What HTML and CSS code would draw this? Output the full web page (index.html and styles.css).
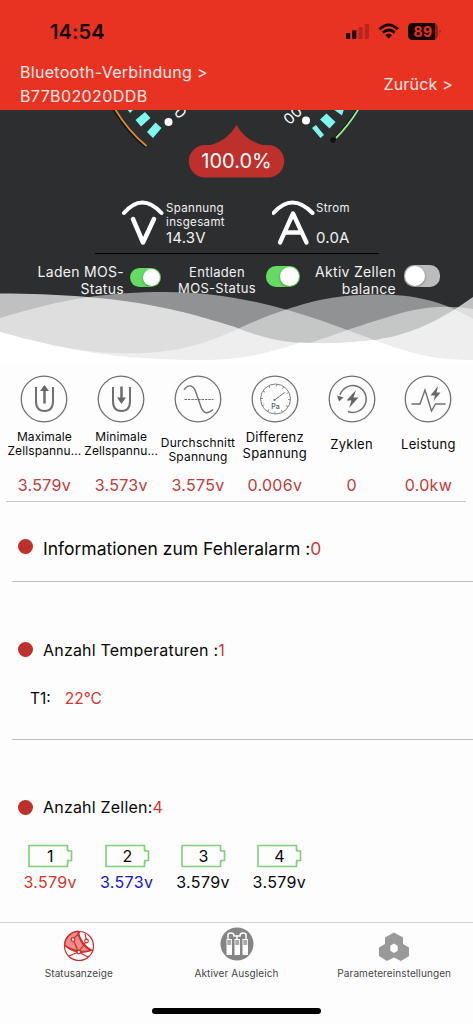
FILE: index.html
```html
<!DOCTYPE html>
<html lang="de">
<head>
<meta charset="utf-8">
<title>Statusanzeige</title>
<link rel="stylesheet" href="styles.css">
</head>
<body>
<div class="app">
  <header class="header">
    <div class="statusbar">
      <span class="clock">14:54</span>
      <svg class="signals" width="100" height="20" viewBox="0 0 100 20">
        <g fill="#140201"><rect x="1" y="12" width="4.200" height="6" rx="1"/><rect x="7.200" y="9.300" width="4.200" height="8.700" rx="1"/></g>
        <g fill="#b9251b"><rect x="13.500" y="6" width="4.200" height="12" rx="1"/><rect x="19.700" y="3" width="4.200" height="15" rx="1"/></g>
        <g fill="none" stroke="#140201" stroke-width="2.700"><path d="M34.500 8.300Q43.700-.5 52.900 8.300"/><path d="M37.700 11.800Q43.700 6.200 49.700 11.800"/></g>
        <path d="M40.300 14.100Q43.700 11.300 47.100 14.100L43.700 17.700Z" fill="#140201"/>
        <rect x="63" y="2" width="30" height="17" rx="5" fill="#962019"/>
        <path d="M68 2H90V19H68Q63 19 63 14V7Q63 2 68 2Z" fill="#140201"/>
        <path d="M94.500 8.500Q97 10.500 94.500 12.500Z" fill="#962019"/>
        <text x="78" y="15.800" class="battery-level">89</text>
      </svg>
    </div>
    <div class="navbar">
      <div class="device"><span class="device-title">Bluetooth-Verbindung &gt;</span><br><span class="device-id">B77B02020DDB</span></div>
      <span class="back">Zurück &gt;</span>
    </div>
  </header>

  <section class="panel">
    <svg class="gauge" width="280" height="75" viewBox="100 110 280 75">
      <path d="M115 109Q128 131 146.500 146" fill="none" stroke="#111" stroke-width="2" transform="translate(-1 1)"/>
      <path d="M115 109Q128 131 146.500 146" fill="none" stroke="#dc8b32" stroke-width="1.800"/>
      <circle cx="333" cy="140" r="2.800" fill="#111"/>
      <path d="M358.500 109Q349 125 336 138" fill="none" stroke="#111" stroke-width="2" transform="translate(-1 0)"/>
      <path d="M358.500 109Q349 125 336 138" fill="none" stroke="#8cf28a" stroke-width="1.800"/>
      <g fill="#7cf8ee">
        <path d="M127 109h7l-4 4Z"/>
        <path d="M135.500 120L145 112L150.500 118L141 126.500Z"/>
        <path d="M147 132L155.500 122.500L161.500 128L153 138Z"/>
        <path d="M312 128L316 125L324 135L320.500 138Z"/>
        <path d="M320 119.500L326.500 113.500L335.500 122L329.500 128.500Z"/>
        <path d="M333 109H344L342 115.500Z"/>
      </g>
      <circle cx="168.500" cy="122" r="4" fill="#fff"/><circle cx="306" cy="120.500" r="4" fill="#fff"/>
      <g class="scale"><text transform="translate(180 113) rotate(50)" x="0" y="5">0</text><text transform="translate(289.500 118.500) rotate(-42)" x="0" y="5">0</text><text transform="translate(296.500 112) rotate(-42)" x="0" y="5">0</text></g>
      <path d="M236.500 125Q245 140 262 145H268A16 16 0 0 1 268 177.500H205A16 16 0 0 1 205 145H211Q228 140 236.500 125Z" fill="#bd302b"/>
      <text x="236.500" y="168" class="percent">100.0%</text>
    </svg>
    <div class="meters">
      <div class="meter meter-voltage">
        <svg width="44" height="48" viewBox="0 0 44 48" fill="none" stroke="#fff" stroke-linecap="round" stroke-linejoin="round"><path d="M2 14Q20-7 39.500 14" stroke-width="4"/><path d="M11 20L21 43.500L32 20" stroke-width="4.500"/></svg>
        <div class="meter-text"><span class="meter-name">Spannung<br>insgesamt</span><span class="meter-value">14.3V</span></div>
      </div>
      <div class="meter meter-current">
        <svg width="44" height="48" viewBox="0 0 44 48" fill="none" stroke="#fff" stroke-linecap="round" stroke-linejoin="round"><path d="M1.500 14Q20-7 40.500 14" stroke-width="4"/><path d="M8 43.500L21 14.500L34.500 43.500M13 33.500H30" stroke-width="4.300"/></svg>
        <div class="meter-text"><span class="meter-name">Strom</span><span class="meter-value">0.0A</span></div>
      </div>
    </div>
    <div class="switches">
      <span class="label label-charge">Laden MOS-<br>Status</span><span class="toggle on toggle-charge"></span>
      <span class="label label-discharge">Entladen<br>MOS-Status</span><span class="toggle on toggle-discharge"></span>
      <span class="label label-balance">Aktiv Zellen<br>balance</span><span class="toggle toggle-balance"></span>
    </div>
    <svg class="waves" width="473" height="80" viewBox="0 285 473 80">
      <g fill="#fff">
        <path opacity=".7" d="M0 293.500C120 294 175 308 235 327C265 339 285 343.500 320 343.500C385 343 420 335 473 297V365H0Z"/>
        <path opacity=".48" d="M0 318C65 298 110 292 165 292C255 292 325 322 374 340C415 355 435 360 473 360V365H0Z"/>
        <path opacity=".48" d="M0 332C55 347 85 353 130 353.500C210 353 235 325 285 310C320 298 345 294.500 378 294.500C415 294.500 442 301 473 319V365H0Z"/>
        <path opacity=".48" d="M0 332C70 351 120 360 200 360C285 360 325 335 385 318C415 308 440 304 473 309V365H0Z"/>
        <path d="M0 332C70 351 120 360 200 360C245 360 272 352 300 342.500C325 344 350 343 374 340C415 355 435 360 473 360V365H0Z"/>
      </g>
    </svg>
  </section>

  <section class="metrics">
    <div class="metric">
      <svg class="metric-icon" viewBox="0 0 48 48"><circle cx="24" cy="24" r="22.800"/><g stroke-width="2"><path d="M16 12V26Q16 36 24.500 36Q33 36 33 26V12"/><path d="M24.500 28.500V15" stroke-width="2.600"/></g><path class="solid" d="M24.500 10L29 16H20Z"/></svg>
      <span class="metric-name up">Maximale<br>Zellspannu...</span><span class="metric-value">3.579v</span>
    </div>
    <div class="metric">
      <svg class="metric-icon" viewBox="0 0 48 48"><circle cx="24" cy="24" r="22.800"/><g stroke-width="2"><path d="M16 12V26Q16 36 24.500 36Q33 36 33 26V12"/><path d="M24.500 11.500V24" stroke-width="2.600"/></g><path class="solid" d="M24.500 29L29 22.500H20Z"/></svg>
      <span class="metric-name up">Minimale<br>Zellspannu...</span><span class="metric-value">3.573v</span>
    </div>
    <div class="metric">
      <svg class="metric-icon" viewBox="0 0 48 48"><circle cx="24" cy="24" r="22.800"/><path d="M10 14.500C15 8.500 20 10 22.500 19L26 29C28.500 38 32.500 40.500 39 34.500" stroke-width="1.400"/><path d="M10.500 24.500H39.500" stroke-dasharray="2.500 .9" stroke-width="1.200"/></svg>
      <span class="metric-name down">Durchschnitt<br>Spannung</span><span class="metric-value">3.575v</span>
    </div>
    <div class="metric">
      <svg class="metric-icon" viewBox="0 0 48 48"><circle cx="24" cy="24" r="22.800"/><circle cx="24.500" cy="24" r="15" stroke-width=".9"/><circle cx="24.500" cy="24" r="13.500" stroke-width="2" stroke-dasharray=".8 6.270"/><path d="M23 25.500L33.500 17.500" stroke-width="1"/><circle class="solid" cx="23.500" cy="25" r="1"/><text class="pa" x="24.500" y="34">Pa</text></svg>
      <span class="metric-name differenz">Differenz<br>Spannung</span><span class="metric-value">0.006v</span>
    </div>
    <div class="metric">
      <svg class="metric-icon" viewBox="0 0 48 48"><circle cx="24" cy="24" r="22.800"/><path d="M12 20A13.400 13.400 0 1 1 20 36.500" stroke-width="1.500"/><path class="solid" d="M9 20.500L15.500 22.500L11 26.500ZM28 15L18.500 25.500H23.500L21 33L30.500 22.500H25.500Z"/></svg>
      <span class="metric-name single">Zyklen</span><span class="metric-value">0</span>
    </div>
    <div class="metric">
      <svg class="metric-icon" viewBox="0 0 48 48"><circle cx="24" cy="24" r="22.800"/><path d="M7.500 29H16L21 15L27.500 36L31.500 29H41.500" stroke-width="1.400"/><path class="solid" d="M34 11L26.500 20.500H31L29.500 26L36.500 17.500H32.500Z"/></svg>
      <span class="metric-name single">Leistung</span><span class="metric-value">0.0kw</span>
    </div>
  </section>

  <section class="info alarm"><h2 class="heading"><i class="dot"></i><span>Informationen zum Fehleralarm :</span><b>0</b></h2></section>
  <section class="info temps">
    <h2 class="heading"><i class="dot"></i><span>Anzahl Temperaturen :</span><b>1</b></h2>
    <p class="temp"><span class="temp-name">T1:</span><span class="temp-value">22°C</span></p>
  </section>
  <section class="info cells">
    <h2 class="heading"><i class="dot"></i><span>Anzahl Zellen:</span><b>4</b></h2>
    <div class="cell-row">
      <div class="cell max"><svg width="46" height="24" viewBox="0 0 46 24"><path d="M2 1.500H40.500V6.500H41.500V7H44.500V16.500H41V18H40.500V22.500H2Z"/><text x="23.500" y="18">1</text></svg><span>3.579v</span></div>
      <div class="cell min"><svg width="46" height="24" viewBox="0 0 46 24"><path d="M2 1.500H40.500V6.500H41.500V7H44.500V16.500H41V18H40.500V22.500H2Z"/><text x="23.500" y="18">2</text></svg><span>3.573v</span></div>
      <div class="cell"><svg width="46" height="24" viewBox="0 0 46 24"><path d="M2 1.500H40.500V6.500H41.500V7H44.500V16.500H41V18H40.500V22.500H2Z"/><text x="23.500" y="18">3</text></svg><span>3.579v</span></div>
      <div class="cell"><svg width="46" height="24" viewBox="0 0 46 24"><path d="M2 1.500H40.500V6.500H41.500V7H44.500V16.500H41V18H40.500V22.500H2Z"/><text x="23.500" y="18">4</text></svg><span>3.579v</span></div>
    </div>
  </section>

  <nav class="tabbar">
    <div class="tabs">
      <div class="tab">
        <svg width="36" height="36" viewBox="0 0 36 36" fill="none" stroke="#c5302b" stroke-width="1.200"><path d="M3.500 18A15 15 0 0 1 17 4C17 11 22 20 30 23.500Q15 29 3.500 18Z" fill="#f28b88"/><circle cx="18" cy="19" r="14.500"/><path d="M8 29L17.500 25L12 12.500L19 5M17.500 25L25.500 14L24 6.500M17.500 25L27 30M17 4.500Q20 18 32 24M3.500 18Q15 27 32.300 23"/><g fill="#fff"><circle cx="12" cy="12.500" r="1.800"/><circle cx="25.500" cy="14" r="1.800"/><circle cx="17.800" cy="25" r="1.800"/></g></svg>
        <span>Statusanzeige</span>
      </div>
      <div class="tab">
        <svg width="36" height="36" viewBox="0 0 36 36"><circle cx="18" cy="17" r="16.500" fill="#858585"/><g fill="#fff"><path d="M7.500 12H13V28H7.500ZM15.500 12H21V28H15.500ZM23.500 12H29V28H23.500Z"/></g><g fill="#aaa"><path d="M8.300 13h3.900v5H8.300ZM16.300 13h3.900v5h-3.900ZM24.300 13h3.900v5h-3.900Z"/></g><path d="M9 12V8Q9 6 12 6Q15 6 15 9H18V12M18 9H21Q21 6 24 6Q27 6 27 8V12" fill="none" stroke="#fff" stroke-width="1.500"/></svg>
        <span>Aktiver Ausgleich</span>
      </div>
      <div class="tab">
        <svg width="36" height="36" viewBox="0 0 36 36"><path fill="#999" fill-rule="evenodd" d="M18 5.500L27 10.500V17L33 20.500V29L25 34L18 30.500L11 34L3 29V20.500L9 17V10.500ZM18 16.500L14.300 18.700V23.800L18 26L21.700 23.800V18.700Z"/></svg>
        <span>Parametereinstellungen</span>
      </div>
    </div>
    <div class="home-indicator"></div>
  </nav>
</div>
</body>
</html>
```

FILE: styles.css
```css
* { box-sizing: border-box; }
body { margin: 0; font-family: Inter, "Liberation Sans", sans-serif; background: #fdfdfd; color: #080808; }
.app { width: 473px; height: 1024px; display: flex; flex-direction: column; overflow: hidden; }
svg { display: block; flex: none; }

.header { height: 110px; background: #e83323; display: flex; flex-direction: column; }
.statusbar { height: 60px; padding: 21px 28px 0 50px; display: flex; justify-content: space-between; color: #140201; }
.clock { font-size: 20px; line-height: 22px; font-weight: 600; letter-spacing: .1px; }
.battery-level { font-size: 14px; font-weight: 700; fill: #e83323; text-anchor: middle; letter-spacing: .5px; }
.navbar { display: flex; justify-content: space-between; padding: 0 20px; color: #fde9e5; font-size: 16px; line-height: 24px; }
.device-title { letter-spacing: .3px; }
.device-id { letter-spacing: .4px; }
.back { padding-top: 12px; letter-spacing: .2px; }

.panel { position: relative; height: 253px; background: #2d2e30; color: #f2f2f2; display: flex; flex-direction: column; }
.gauge { margin-left: 100px; }
.scale { font-size: 15px; fill: #fff; text-anchor: middle; }
.percent { font-size: 20px; fill: #fff; text-anchor: middle; }
.meters { height: 69px; width: 284px; margin-left: 95px; padding: 14px 0 0 27px; display: flex; border-bottom: 1.500px solid #000; }
.meter { display: flex; width: 150px; flex: none; }
.meter-current { width: 106px; }
.meter-text { display: flex; flex-direction: column; justify-content: space-between; height: 47px; padding-top: 2px; }
.meter-name { font-size: 11.500px; line-height: 14px; letter-spacing: .35px; white-space: nowrap; }
.meter-value { font-size: 15px; line-height: 16px; letter-spacing: .2px; }
.switches { display: flex; align-items: flex-start; padding-top: 9px; }
.label { font-size: 14px; line-height: 17px; letter-spacing: .3px; white-space: nowrap; flex: none; }
.label-charge { width: 124px; text-align: right; }
.label-discharge { width: 86px; margin-left: 13px; text-align: center; font-size: 13px; line-height: 16px; padding-top: 1px; }
.label-balance { width: 96px; text-align: right; }
.toggle { width: 31px; height: 19px; margin: 5px 0 0 6px; border-radius: 10px; background: #bcbcbc; display: flex; flex: none; }
.toggle::after { content: ""; width: 17px; height: 17px; margin: 1px; border-radius: 50%; background: #fff; box-shadow: 0 1px 3px #0005; }
.on { background: #65db63; justify-content: flex-end; }
.toggle-discharge { width: 34px; height: 21px; margin: 3px 0 0 6px; }
.toggle-discharge::after { width: 19px; height: 19px; }
.toggle-balance { width: 36px; height: 22px; margin: 2px 0 0 8px; }
.toggle-balance::after { width: 20px; height: 20px; }
.waves { position: absolute; left: 0; top: 175px; }

.metrics { height: 139px; margin: 0 7px 0 6px; border-bottom: 1.500px solid #c5c5c5; display: grid; grid-template-columns: repeat(6, 76.800px); padding-top: 12px; }
.metric { display: flex; flex-direction: column; align-items: center; height: 124px; }
.metric-icon { width: 48px; height: 48px; fill: none; stroke: #707070; stroke-width: 1.300; }
.solid { fill: #666; stroke: none; }
.pa { font-size: 7px; font-weight: 600; fill: #666; stroke: none; text-anchor: middle; }
.metric-name { height: 53px; text-align: center; font-size: 12px; line-height: 14px; letter-spacing: .1px; white-space: nowrap; padding-top: 7px; }
.down { padding-top: 13px; letter-spacing: .2px; }
.differenz { font-size: 13px; line-height: 16px; padding-top: 6px; letter-spacing: .25px; }
.single { font-size: 13px; padding-top: 14px; letter-spacing: .25px; }
.metric-value { font-size: 16px; line-height: 18px; color: #bd3b38; letter-spacing: .3px; }

.info { margin-left: 12px; border-bottom: 1.500px solid #bdbdbd; }
.heading { margin: 0; padding-left: 6px; display: flex; align-items: center; font-weight: 400; font-size: 16px; line-height: 18px; height: 18px; letter-spacing: .2px; }
.heading b { font-weight: 400; color: #d3352d; }
.dot { width: 15px; height: 15px; border-radius: 50%; background: #bd302b; margin-right: 10px; }
.alarm { height: 80px; padding-top: 37px; }
.alarm .heading { font-size: 17.500px; height: 20px; letter-spacing: 0; }
.alarm .dot { margin-bottom: 5px; }
.temps { height: 158px; padding-top: 60px; }
.temps .heading { height: 15px; overflow: hidden; }
.temp { margin: 33px 0 0 18px; font-size: 15.500px; line-height: 18px; display: flex; gap: 14px; }
.temp-value { color: #d3352d; }
.cells { height: 182px; padding-top: 58px; border: 0; }
.cell-row { display: flex; padding: 28px 0 0 0; }
.cell { width: 76.400px; display: flex; flex-direction: column; align-items: center; font-size: 16px; line-height: 20px; gap: 4px; letter-spacing: .35px; }
.cell path { fill: none; stroke: #7fce79; stroke-width: 1.600; }
.cell text { font-size: 16px; fill: #080808; text-anchor: middle; }
.max span { color: #d3352d; }
.min span { color: #1712cd; }

.tabbar { height: 102px; border-top: 1px solid #d2d2d2; }
.tabs { height: 85px; display: grid; grid-template-columns: repeat(3, 157.700px); padding-top: 4px; }
.tab { display: flex; flex-direction: column; align-items: center; font-size: 10px; line-height: 14px; letter-spacing: .1px; color: #444; gap: 3px; }
.home-indicator { width: 169px; height: 6px; border-radius: 3px; background: #000; margin: 0 auto; }
```
